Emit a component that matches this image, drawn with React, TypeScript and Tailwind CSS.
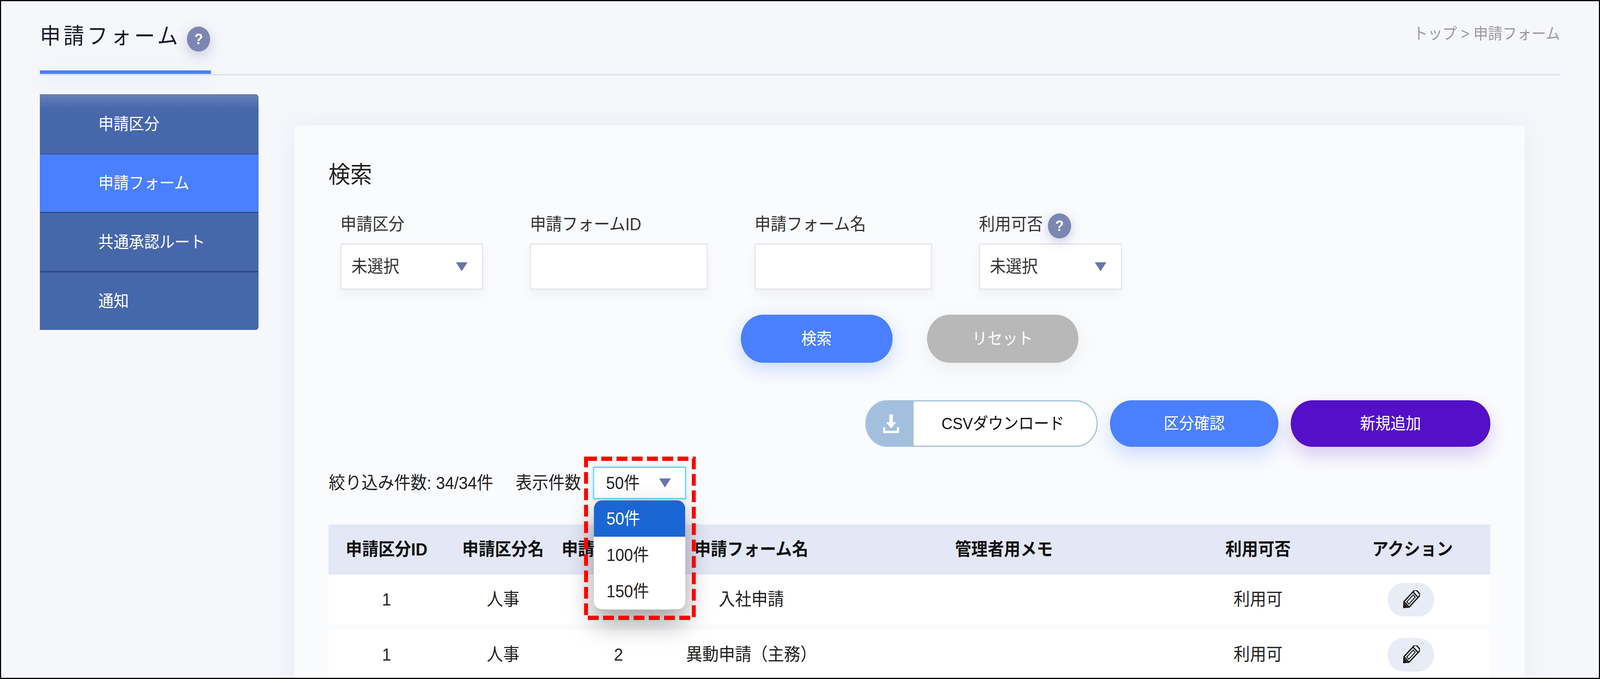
import React from 'react'

const font = { fontFamily: '"Liberation Sans", "Noto Sans CJK JP", sans-serif' }

function Help({ className }: { className: string }) {
  return (
    <span className={`flex h-[64px] w-[64px] shrink-0 items-center justify-center rounded-full bg-[#7c86b2] text-[38px] font-bold text-white ${className}`}>
      ?
    </span>
  )
}

function Arrow() {
  return (
    <svg width="32" height="23" viewBox="0 0 32 23" className="shrink-0">
      <path d="M0 0H32L16 23Z" fill="#6b76a8" />
    </svg>
  )
}

function Pencil() {
  return (
    <svg width="50" height="48" viewBox="0 0 50 48" fill="none">
      <g transform="rotate(-45 25 24)" stroke="#1c1c1c" strokeWidth="3.5" strokeLinejoin="round">
        <path d="M-3 24 L8 14 H48 Q53 14 53 24 Q53 34 48 34 H8 Z" />
        <path d="M8 14 V34 M43 14 V34" />
        <path d="M13 20 H38 V28 H13 Z" strokeWidth="2.5" />
        <path d="M-3 24 L4 18 V30 Z" fill="#1c1c1c" />
      </g>
    </svg>
  )
}

function Download() {
  return (
    <svg width="44" height="48" viewBox="0 0 44 48" fill="none">
      <path d="M17 0H27V20H36L22 36L8 20H17Z" fill="#ffffff" />
      <path d="M3 33V45H41V33" stroke="#ffffff" strokeWidth="6" />
    </svg>
  )
}

function Field({ label, width, help, children }: { label: string; width: string; help?: boolean; children?: React.ReactNode }) {
  return (
    <div className={width}>
      <div className="mb-[13px] flex h-[64px] items-center gap-[14px] text-[44px] leading-none text-[#333]">
        <span className="mb-[8px]">{label}</span>
        {help && <Help className="shadow-[0_8px_30px_rgba(90,90,150,0.3)]" />}
      </div>
      <div className="flex h-[118px] items-center justify-between border-[3px] border-[#e5e5e8] bg-white pl-[27px] pr-[40px] text-[44px] text-[#333] shadow-[0_14px_24px_rgba(120,120,150,0.07)]">
        {children}
      </div>
    </div>
  )
}

const cols = ['申請区分ID', '申請区分名', '申請フォームID', '申請フォーム名', '管理者用メモ', '利用可否', 'アクション']

const rows = [
  ['1', '人事', '1', '入社申請', '', '利用可'],
  ['1', '人事', '2', '異動申請（主務）', '', '利用可'],
]

const grid = 'grid grid-cols-[320px_322px_314px_418px_974px_426px_425px] items-center text-center text-[45px]'

export default function App() {
  return (
    <div className="h-[1737px] w-full overflow-hidden">
      <div className="h-[1737px] w-[4408px] origin-top-left scale-x-[0.92922] overflow-hidden border-[3px] border-black bg-[#f6f7fb] text-[#222]" style={font}>
        {/* Header */}
        <header className="ml-[107px] mr-[107px] flex h-[190px] items-end justify-between border-b-[4px] border-[#e2e5f0]">
          <div className="flex h-[177px] w-[471px] flex-col justify-between pt-[52px]">
            <div className="flex items-start">
              <h1 className="text-[57px] leading-[57px] tracking-[8px] text-[#1a1a2a]">申請フォーム</h1>
              <Help className="ml-[17px] mt-[4px] shadow-[0_10px_34px_rgba(90,90,150,0.3)]" />
            </div>
            <div className="h-[9px] bg-[#4a80ff] shadow-[0_10px_50px_rgba(74,128,255,0.22)]" />
          </div>
          <div className="mb-[83px] text-[40px] leading-none text-[#9a9a9f]">トップ &gt; 申請フォーム</div>
        </header>

        <div className="ml-[107px] flex items-start">
          {/* Sidebar */}
          <nav className="mt-[48px] w-[602px] overflow-hidden rounded-r-[8px] bg-[#2f4b86] text-[42px] text-white">
            <div className="mb-[2px] flex h-[152px] items-center bg-gradient-to-b from-[#6680b9] to-[#4767ab] to-[25%] pl-[161px]">申請区分</div>
            <div className="mb-[3px] flex h-[147px] items-center bg-[#4a80ff] pl-[161px]">申請フォーム</div>
            <div className="mb-[4px] flex h-[148px] items-center bg-[#4767ab] pl-[161px]">共通承認ルート</div>
            <div className="flex h-[147px] items-center bg-[#4767ab] pl-[161px]">通知</div>
          </nav>

          {/* Card */}
          <main className="ml-[98px] mt-[128px] h-[1500px] w-[3391px] rounded-[14px] bg-[#fafbfd] px-[95px] pt-[97px] shadow-[0_0_70px_rgba(120,120,180,0.09)]">
            <h2 className="text-[60px] leading-[60px] text-[#222]">検索</h2>

            <div className="ml-[33px] mt-[68px] flex gap-[129px]">
              <Field label="申請区分" width="w-[393px]">
                未選択
                <Arrow />
              </Field>
              <Field label="申請フォームID" width="w-[490px]" />
              <Field label="申請フォーム名" width="w-[489px]" />
              <Field label="利用可否" width="w-[394px]" help>
                未選択
                <Arrow />
              </Field>
            </div>

            <div className="mt-[64px] flex justify-center gap-[95px] text-[42px] text-white">
              <button className="h-[123px] w-[418px] rounded-full bg-[#4a80ff] shadow-[0_14px_50px_rgba(74,128,255,0.3)]">検索</button>
              <button className="h-[123px] w-[417px] rounded-full bg-[#b8b8b8] shadow-[0_14px_50px_rgba(120,120,120,0.1)]">リセット</button>
            </div>

            <div className="mt-[96px] flex justify-end gap-[34px] text-[42px]">
              <button className="flex h-[119px] w-[640px] items-center overflow-hidden rounded-full border-[3px] border-[#a2bfdd] bg-white text-[#111]">
                <span className="flex h-full w-[130px] shrink-0 items-center justify-center bg-[#a2bfdd] pl-[6px]">
                  <Download />
                </span>
                <span className="flex-1 pr-[12px] text-center">CSVダウンロード</span>
              </button>
              <button className="h-[119px] w-[464px] rounded-full bg-[#4a80ff] text-white shadow-[0_22px_50px_rgba(74,128,255,0.25)]">区分確認</button>
              <button className="h-[119px] w-[550px] rounded-full bg-[#5310c8] text-white shadow-[0_22px_50px_rgba(83,16,200,0.2)]">新規追加</button>
            </div>

            {/* Filter row */}
            <div className="relative z-10 mt-[51px] flex h-[83px] items-center text-[45px] text-[#222]">
              <span className="ml-[1px]">絞り込み件数: 34/34件</span>
              <span className="ml-[62px]">表示件数</span>
              <div className="relative ml-[33px]">
                <div className="flex h-[83px] w-[256px] items-center justify-between border-[3px] border-[#6ad0e8] bg-white pl-[33px] pr-[39px] text-[44px] shadow-[0_0_12px_rgba(106,208,232,0.6)]">
                  50件
                  <Arrow />
                </div>
                <ul className="absolute left-[2px] top-[86px] w-[252px] overflow-hidden rounded-[22px] border-b-[3px] border-[#b9b9bd] bg-white text-[44px] shadow-[0_30px_70px_rgba(0,0,0,0.38)]">
                  <li className="flex h-[93px] items-center bg-[#1a66d4] pl-[35px] text-white">50件</li>
                  <li className="flex h-[93px] items-center pl-[35px]">100件</li>
                  <li className="flex h-[93px] items-center pl-[35px]">150件</li>
                </ul>
                {/* Red annotation */}
                <svg width="308" height="418" viewBox="0 0 308 418" fill="none" className="absolute left-[-25px] top-[-26px]">
                  <rect x="5.5" y="5.5" width="297" height="407" stroke="#ff0000" strokeWidth="11" strokeDasharray="30 12" />
                </svg>
              </div>
            </div>

            {/* Table */}
            <div className="mt-[65px]">
              <div className={`${grid} h-[128px] bg-[#e4e7f6] font-bold text-[#111]`}>
                {cols.map((c) => (
                  <div key={c} className="whitespace-nowrap">{c}</div>
                ))}
              </div>
              {rows.map((r) => (
                <div key={r[2]} className={`${grid} mb-[14px] h-[127px] bg-white text-[#222]`}>
                  {r.map((v, i) => (
                    <div key={i} className="whitespace-nowrap">{v}</div>
                  ))}
                  <div className="flex justify-center pr-[10px]">
                    <button className="flex h-[86px] w-[128px] items-center justify-center rounded-full bg-[#e7ecf6]">
                      <Pencil />
                    </button>
                  </div>
                </div>
              ))}
            </div>
          </main>
        </div>
      </div>
    </div>
  )
}
